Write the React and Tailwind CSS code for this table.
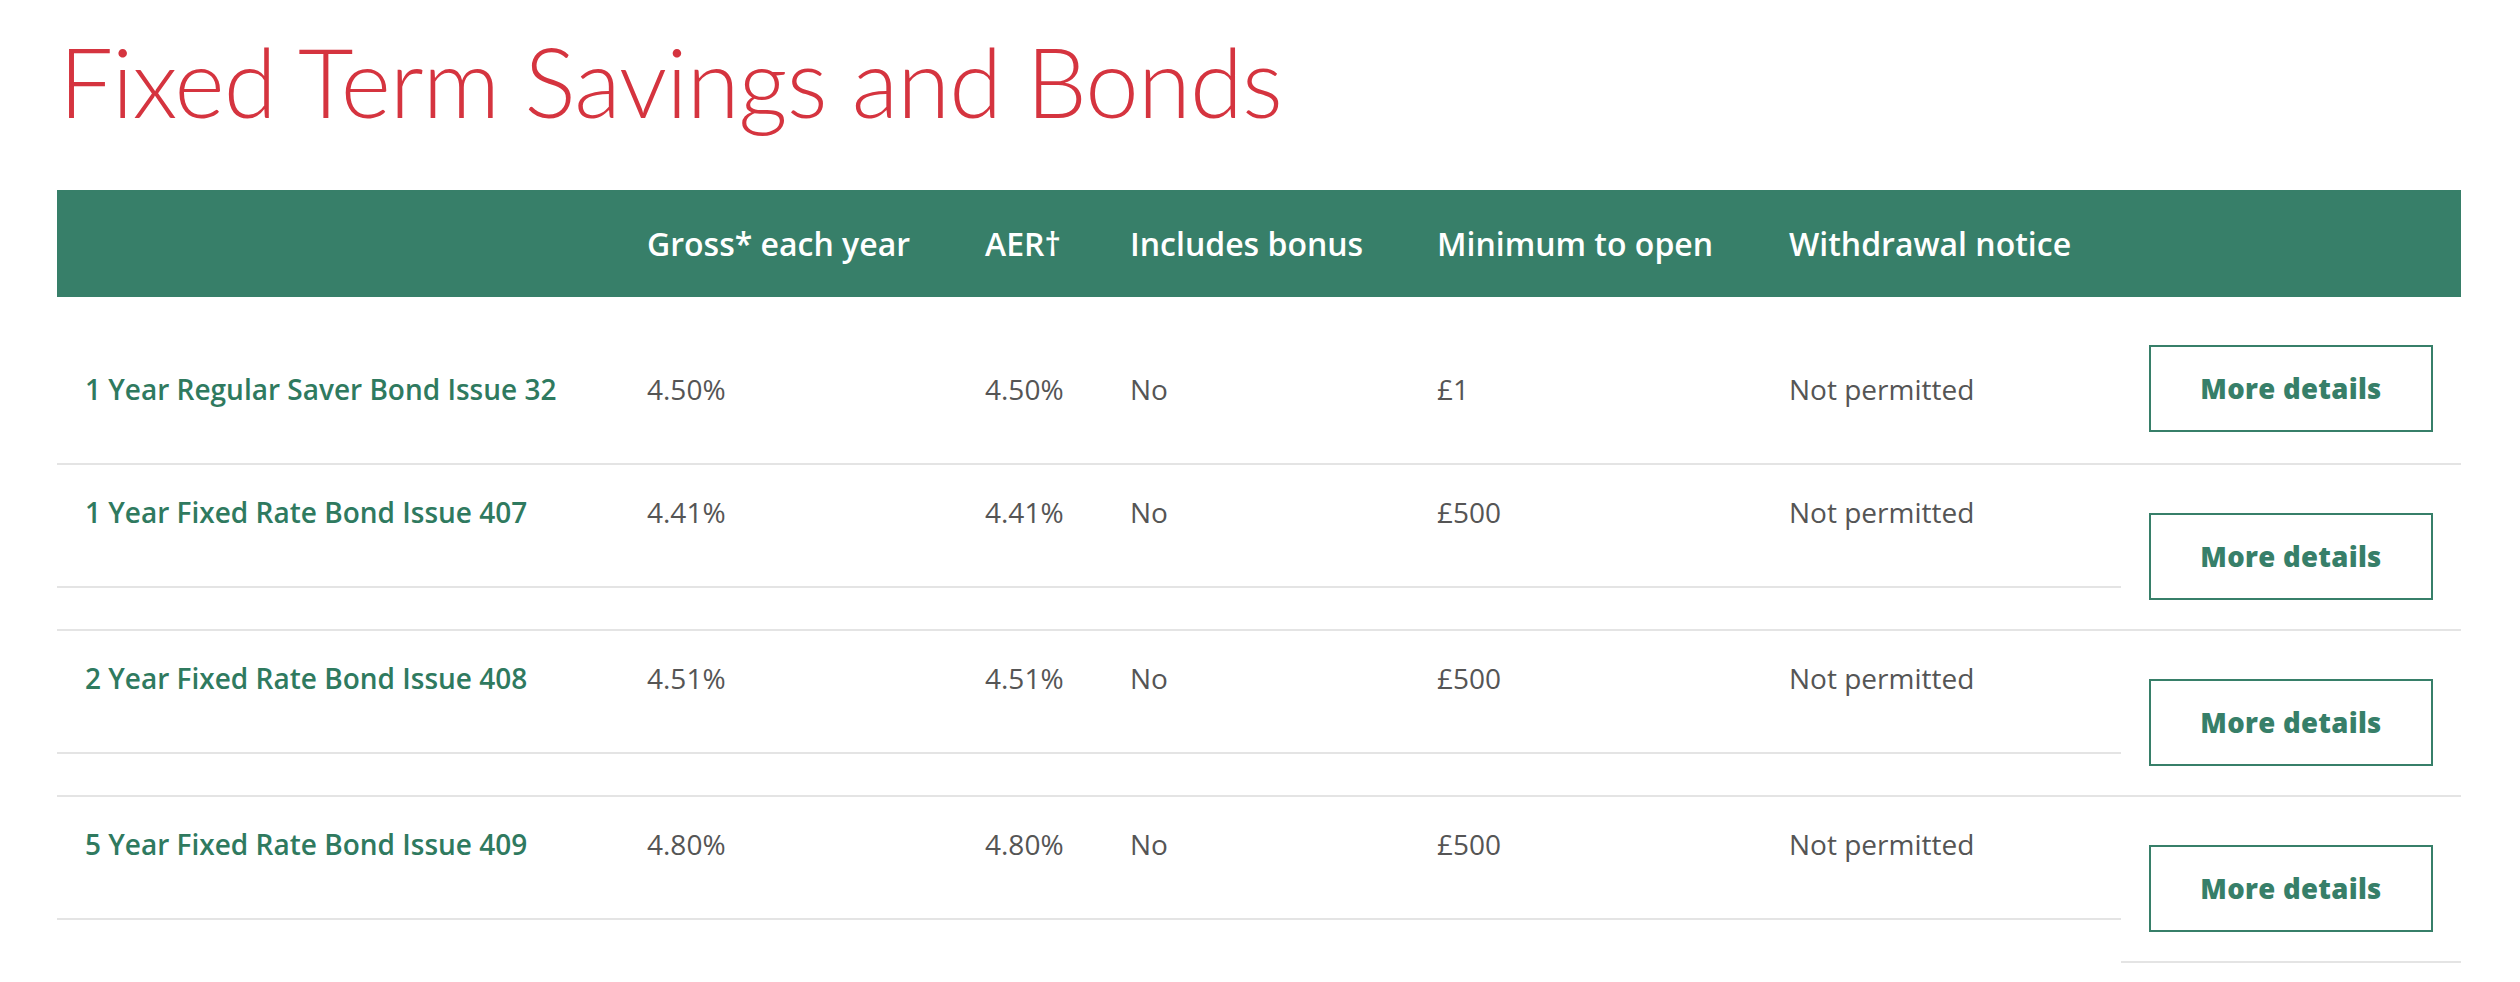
import React from "react";

const cols = "grid grid-cols-[562px_338px_145px_307px_352px_360px]";

const rows = [
  { name: "1 Year Regular Saver Bond Issue 32", gross: "4.50%", aer: "4.50%", bonus: "No", min: "£1", notice: "Not permitted" },
  { name: "1 Year Fixed Rate Bond Issue 407", gross: "4.41%", aer: "4.41%", bonus: "No", min: "£500", notice: "Not permitted" },
  { name: "2 Year Fixed Rate Bond Issue 408", gross: "4.51%", aer: "4.51%", bonus: "No", min: "£500", notice: "Not permitted" },
  { name: "5 Year Fixed Rate Bond Issue 409", gross: "4.80%", aer: "4.80%", bonus: "No", min: "£500", notice: "Not permitted" },
];

function Btn() {
  return (
    <button className="w-[284px] h-[87px] border-2 border-[#377f69] bg-white flex items-center justify-center text-[#377f69] text-[27.5px] font-extrabold tracking-[0.3px] font-['Open_Sans',sans-serif]">
      More details
    </button>
  );
}

function Cells({ r }) {
  const c = "pl-[28px] whitespace-nowrap";
  return (
    <>
      <div className={`${c} font-semibold text-[#2f7a5f]`}>{r.name}</div>
      <div className={c}>{r.gross}</div>
      <div className={c}>{r.aer}</div>
      <div className={c}>{r.bonus}</div>
      <div className={c}>{r.min}</div>
      <div className={c}>{r.notice}</div>
    </>
  );
}

export default function App() {
  return (
    <div className="w-[2520px] min-h-[982px] bg-white pl-[57px] font-['Open_Sans',sans-serif]">
      <h1 className="pt-[33px] h-[190px] pl-[2px] text-[96px] leading-none font-light tracking-[-0.9px] text-[#d5343f] font-['Lato',sans-serif]">
        Fixed Term Savings and Bonds
      </h1>
      <div className="w-[2404px]">
        <div className="grid grid-cols-[562px_338px_145px_307px_352px_360px_340px] h-[107px] bg-[#377f69] items-center text-white text-[32px] font-semibold">
          <div />
          <div className="pl-[28px] whitespace-nowrap">Gross* each year</div>
          <div className="pl-[28px] whitespace-nowrap">AER†</div>
          <div className="pl-[28px] whitespace-nowrap">Includes bonus</div>
          <div className="pl-[28px] whitespace-nowrap">Minimum to open</div>
          <div className="pl-[28px] whitespace-nowrap">Withdrawal notice</div>
          <div />
        </div>
        <div className="grid grid-cols-[562px_338px_145px_307px_352px_360px_340px] h-[168px] pt-[48px] pb-[31px] border-b-2 border-[#e4e4e4] items-center text-[28px] text-[#555555]">
          <Cells r={rows[0]} />
          <div className="pl-[28px]"><Btn /></div>
        </div>
        {rows.slice(1).map((r, i) => (
          <div key={i} className={`flex items-start ${i < 2 ? "border-b-2 border-[#e4e4e4]" : ""}`}>
            <div className={`${cols} w-[2064px] h-[123px] pt-[26px] border-b-2 border-[#e4e4e4] items-start text-[28px] text-[#555555] content-start`}>
              <Cells r={r} />
            </div>
            <div className={`w-[340px] h-[164px] pt-[48px] pl-[28px] ${i === 2 ? "h-[166px] border-b-2 border-[#e4e4e4]" : ""}`}>
              <Btn />
            </div>
          </div>
        ))}
      </div>
    </div>
  );
}
